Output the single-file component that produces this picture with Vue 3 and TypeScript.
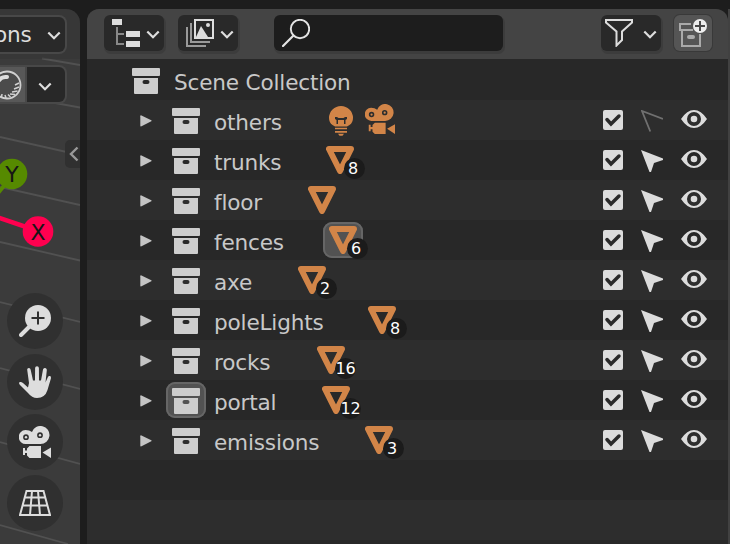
<script setup lang="ts">
interface Item {
  name: string
  kind: 'mesh' | 'lights'
  labelWidth: number
  count?: number
  selectable?: boolean
  activeIcon?: boolean
  activeMesh?: boolean
}

const items: Item[] = [
  { name: 'others', kind: 'lights', labelWidth: 113, selectable: false },
  { name: 'trunks', kind: 'mesh', labelWidth: 112, count: 8 },
  { name: 'floor', kind: 'mesh', labelWidth: 94 },
  { name: 'fences', kind: 'mesh', labelWidth: 115, count: 6, activeMesh: true },
  { name: 'axe', kind: 'mesh', labelWidth: 84, count: 2 },
  { name: 'poleLights', kind: 'mesh', labelWidth: 154, count: 8 },
  { name: 'rocks', kind: 'mesh', labelWidth: 103, count: 16 },
  { name: 'portal', kind: 'mesh', labelWidth: 108, count: 12, activeIcon: true },
  { name: 'emissions', kind: 'mesh', labelWidth: 151, count: 3 },
]
</script>

<template>
  <div class="screen">
    <svg class="defs" width="0" height="0">
      <symbol id="box" viewBox="0 0 28 26">
        <rect width="28" height="8" rx="1" />
        <path fill-rule="evenodd" d="M2 10H26V25q0 1-1 1H3q-1 0-1-1ZM12.5 12a2 2 0 0 0 0 4h3a2 2 0 0 0 0-4Z" />
      </symbol>
      <symbol id="chevron" viewBox="0 0 14 9">
        <path d="M1.3 1.5 7 7.2 12.7 1.5" fill="none" stroke="currentColor" stroke-width="2.200" />
      </symbol>
      <symbol id="movie" viewBox="0 0 32 32">
        <path fill-rule="evenodd" d="M6.5 4A6.5 6.5 0 1 0 7 18H21.5A9 9 0 1 0 13 6Q10.500 4 6.500 4ZM7 8.300a2.900 2.900 0 1 1 0 5.800a2.900 2.900 0 0 1 0-5.800ZM21 6.300a2.900 2.900 0 1 1 0 5.800a2.900 2.900 0 0 1 0-5.800Z" />
        <circle cx="7" cy="11.200" r="1.200" /><circle cx="21" cy="9.200" r="1.200" />
        <path d="M10.500 20H22V32H10.500L8 29.500V27H6V29H4V22H6V24.500H8V22.500ZM32 21.500V32L23.500 26.500Z" />
      </symbol>
    </svg>

    <section class="viewport">
      <svg class="scene" viewBox="0 0 80 535" width="80" height="535">
        <path d="M42 49.500 80 56M0 84 80 98.500M0 128 80 146M0 178 80 196M0 233 80 251.500M0 293 80 313M0 359 80 380M0 433 80 455M0 516 68 535" stroke="#515151" stroke-width="1.800" />
        <path d="M-2 184 8 172" stroke="#568a00" stroke-width="4" />
        <path d="M-2 208.500 38 222" stroke="#ff004f" stroke-width="4.500" />
        <circle cx="12" cy="165" r="15.300" fill="#568a00" />
        <circle cx="38" cy="222.500" r="15.300" fill="#ff004f" />
        <text x="12" y="173" text-anchor="middle" class="axis">Y</text>
        <text x="38" y="230.500" text-anchor="middle" class="axis">X</text>
      </svg>
      <div class="view-header">
        <div class="options"><span>ons</span><svg class="chev"><use href="#chevron" /></svg></div>
      </div>
      <div class="shading">
        <div class="ball">
          <svg width="30" height="30" viewBox="0 0 30 30">
            <circle cx="15" cy="15" r="13.500" fill="#4b4b4b" stroke="#d0d0d0" stroke-width="1.800" />
            <path d="M5 14Q8 6 15 7" fill="none" stroke="#ddd" stroke-width="4" stroke-linecap="round" />
            <path d="M27 13 23 15M27 17 22 19M25.500 21 20 22M23 24.500 18 24M18.500 27 16 24.500M14 28 13 25M9.500 27.500 10 24" stroke="#d0d0d0" stroke-width="1.500" />
          </svg>
        </div>
        <div class="drop"><svg class="chev"><use href="#chevron" /></svg></div>
      </div>
      <div class="sidebar-tab">
        <svg width="10" height="16" viewBox="0 0 10 16"><path d="M8.500 1.500 2 8l6.500 6.500" fill="none" stroke="#999" stroke-width="2.400" /></svg>
      </div>
      <nav class="gizmos">
        <div class="gizmo">
          <svg width="32" height="32" viewBox="0 0 32 32"><circle cx="19" cy="13" r="13" /><path d="m10 22-8 8" stroke="#ddd" stroke-width="4" stroke-linecap="round" /><path d="M12.500 13h13M19 6.500v13" stroke="#303030" stroke-width="2" /></svg>
        </div>
        <div class="gizmo">
          <svg width="32" height="32" viewBox="0 0 32 32">
            <path d="M10 17 8.200 3.700Q8 2 9.800 1.900 11.300 1.800 11.600 3.500L14 14.500 16 14.500 16.100 2Q16.200.200 18 .200 19.800.200 19.900 2L20 14.500 22 14.500 24 3.500Q24.400 1.700 26.200 2 28 2.400 27.800 4.200L26.500 16.500 28.800 11.200Q29.600 9.600 31 10 32.300 10.500 31.900 12.500L28.500 24Q26 32 18 32 13 32 9 27L1 19Q-.800 17 .800 16.100 2 15.500 4 17L9 21.500Z" />
          </svg>
        </div>
        <div class="gizmo"><svg class="movie"><use href="#movie" /></svg></div>
        <div class="gizmo">
          <svg width="32" height="26" viewBox="0 0 32 26"><path d="M7.500 1h17L31 25H1ZM5.800 7.500h20.400M3.800 15.500h24.400M13 1l-2 24M19 1l2 24" fill="none" stroke="#ddd" stroke-width="2" /></svg>
        </div>
      </nav>
    </section>

    <section class="outliner">
      <header class="toolbar">
        <button class="tool tree">
          <svg width="28" height="28" viewBox="0 0 28 28"><path d="M5 8V25H12M5 15H12" fill="none" stroke="#888" stroke-width="2" /><path d="M0 0h10v6H0ZM14 12h14v6H14ZM14 22h14v6H14Z" /></svg>
          <svg class="chev"><use href="#chevron" /></svg>
        </button>
        <button class="tool display">
          <svg width="28" height="28" viewBox="0 0 28 28"><path d="M1 8V27H20M5 4V23H24" fill="none" stroke="#999" stroke-width="2" /><rect x="9" y="1" width="18" height="18" fill="none" stroke="#ddd" stroke-width="2" /><path d="m10 18 5-11 7 11Z" /><circle cx="22" cy="6" r="2" /></svg>
          <svg class="chev"><use href="#chevron" /></svg>
        </button>
        <div class="search">
          <svg width="28" height="28" viewBox="0 0 28 28"><circle cx="18" cy="10" r="9.200" fill="none" stroke="#e4e4e4" stroke-width="1.900" /><path d="M11.500 16.500 1 27" stroke="#e4e4e4" stroke-width="2.200" stroke-linecap="round" /></svg>
        </div>
        <button class="tool filter">
          <svg width="28" height="28" viewBox="0 0 28 28"><path d="M1 1H27V3.500L17 12.500V21L11.500 26.500V12.500L1 3.500Z" fill="none" stroke="#ddd" stroke-width="2" /></svg>
          <svg class="chev"><use href="#chevron" /></svg>
        </button>
        <button class="new-collection">
          <svg width="28" height="28" viewBox="0 0 28 28"><path d="M12 5H1v6H14M3 11V27H21V15" fill="none" stroke="#aaa" stroke-width="2" /><rect x="8" y="16" width="8" height="4" rx="2" fill="#aaa" /><circle cx="21" cy="7" r="7" fill="#eee" /><path d="M16 7h10M21 2v10" stroke="#4a4a4a" stroke-width="2" /></svg>
        </button>
      </header>

      <div class="row root">
        <svg class="box"><use href="#box" /></svg>
        <span class="label">Scene Collection</span>
      </div>
      <div v-for="item in items" :key="item.name" class="row child">
        <svg class="expand" viewBox="0 0 12 12"><path d="M.300 1.200Q.300 0 1.500.500L11.300 5.200Q12 5.700 11.300 6.200L1.500 11.300Q.300 11.800.300 10.600Z" /></svg>
        <span class="box-cell" :class="{ lit: item.activeIcon }"><svg class="box"><use href="#box" /></svg></span>
        <span class="label" :style="{ width: item.labelWidth + 'px' }">{{ item.name }}</span>
        <span v-if="item.kind === 'lights'" class="lights">
          <svg width="28" height="32" viewBox="0 0 28 32">
            <path fill-rule="evenodd" d="M14 1A12 12 0 0 0 2 13Q2 17.500 5.500 20L8 21.500H20L22.500 20Q26 17.500 26 13A12 12 0 0 0 14 1ZM8 12H10L11.500 13H16.500L18 12H20V14L18.500 15V19H17V15H11V19H9.500V15L8 14Z" />
            <path d="M8 22.800h12v1.500h-12ZM8 26h12v1.700h-12ZM11 28.700h6l-1.500 2h-3Z" />
          </svg>
          <svg class="movie"><use href="#movie" /></svg>
        </span>
        <span v-else class="mesh" :class="{ lit: item.activeMesh }">
          <svg width="28" height="28" viewBox="0 0 28 28"><path d="M3 3H25L14 25Z" fill="none" stroke="#d28548" stroke-width="6" stroke-linejoin="round" /></svg>
          <span v-if="item.count" class="badge" :class="{ wide: item.count > 9 }">{{ item.count }}</span>
        </span>
        <span class="controls">
          <svg width="20" height="20" viewBox="0 0 20 20"><rect width="20" height="20" rx="2" /><path d="m4 9.500 4 4.500 8-8" fill="none" stroke="#292929" stroke-width="3.500" stroke-linecap="round" /></svg>
          <svg class="cursor" width="22" height="22" viewBox="0 0 22 22">
            <path v-if="item.selectable === false" d="M9.300 21.500 1 1 22 9" fill="none" stroke="#707070" stroke-width="1.800" />
            <path v-else d="M0 0 22 8.500V10L13 13 10 22H8.500Z" />
          </svg>
          <svg class="eye" width="26" height="18" viewBox="0 0 26 18"><path fill-rule="evenodd" d="M0 9Q6 0 13 0T26 9Q20 18 13 18T0 9ZM13 2a7 7 0 1 0 0 14a7 7 0 0 0 0-14Z" /><circle cx="13" cy="9" r="3.300" /></svg>
        </span>
      </div>
      <div class="row"></div>
      <div class="row"></div>
      <div class="row"></div>
    </section>
    <div class="edge"></div>
  </div>
</template>

<style>
body { background: #1d1d1d; overflow: hidden; }
</style>

<style scoped>
.screen {
  box-sizing: border-box;
  display: flex;
  width: 730px;
  height: 544px;
  padding-top: 9px;
  overflow: hidden;
  background: #1d1d1d;
  color: #c8c8c8;
  font: 21.600px/40px "DejaVu Sans", sans-serif;
  letter-spacing: -0.180px;
}
svg { display: block; flex: none; fill: currentColor; }
.defs { position: absolute; }
.chev { width: 14px; height: 9px; color: #ddd; }
.movie { width: 32px; height: 32px; }

.viewport {
  position: relative;
  flex: none;
  width: 80px;
  margin-right: 7px;
  overflow: hidden;
  border-radius: 0 14px 0 0;
  background: #3b3b3b;
}
.scene { position: absolute; inset: 0; }
.axis { fill: #161616; font-size: 22px; letter-spacing: 0; }
.view-header {
  position: relative;
  height: 50px;
  padding-top: 6px;
  box-sizing: border-box;
  background: rgba(48, 48, 48, 0.35);
}
.options {
  display: flex;
  align-items: center;
  box-sizing: border-box;
  width: 67px;
  height: 39px;
  border: 2px solid #484848;
  border-left: 0;
  border-radius: 0 8px 8px 0;
  background: #292929;
  color: #ddd;
}
.options span { margin-left: -6px; width: 53px; }
.options .chev { margin-top: 2px; }
.shading { position: relative; display: flex; width: 67px; margin-top: 6px; }
.ball {
  box-sizing: border-box;
  display: flex;
  align-items: center;
  width: 27px;
  height: 39px;
  border: 2px solid #484848;
  border-left: 0;
  background: #585858;
}
.ball svg { margin-left: -8px; }
.drop {
  box-sizing: border-box;
  width: 40px;
  height: 39px;
  padding: 15px 0 0 11px;
  border: 2px solid #484848;
  border-left: 0;
  border-radius: 0 8px 8px 0;
  background: #282828;
}
.sidebar-tab {
  position: relative;
  display: flex;
  align-items: center;
  width: 15px;
  height: 28px;
  margin: 36px 0 0 auto;
  border-radius: 5px 0 0 5px;
  background: #303030;
}
.sidebar-tab svg { margin-left: 4px; }
.gizmos {
  position: relative;
  display: flex;
  flex-direction: column;
  gap: 4.700px;
  margin: 125px 0 0 7px;
}
.gizmo {
  display: grid;
  place-items: center;
  width: 56px;
  height: 56px;
  border-radius: 50%;
  background: #303030;
  color: #ddd;
}

.outliner {
  flex: none;
  width: 641px;
  overflow: hidden;
  border-radius: 12px 12px 0 0;
  background: #282828;
}
.toolbar {
  display: flex;
  box-sizing: border-box;
  height: 50px;
  padding: 6px 0 0 17px;
  background: #444;
}
.tool, .search, .new-collection {
  display: flex;
  align-items: center;
  box-sizing: border-box;
  flex: none;
  height: 36px;
  border: 0;
  border-radius: 6px;
  padding: 0 0 0 8px;
  background: #292929;
  color: #ddd;
  box-shadow: 1px 2px 0 1px #3c3c3c;
}
.tool { width: 60px; }
.tool .chev { margin: 2px 0 0 6px; }
.display { margin-left: 14px; }
.search { width: 229px; margin-left: 36px; background: #1d1d1d; }
.filter { width: 60px; margin-left: 98px; padding-left: 4px; }
.filter .chev { margin-left: 10px; }
.new-collection { width: 38px; margin-left: 13px; padding-left: 5px; background: #555; box-shadow: 0 0 0 1px #393939; }

.row { display: flex; align-items: center; height: 40px; }
.row:nth-child(odd) { background: #2d2d2d; }
.root { padding: 1px 0 0 45px; }
.root .label { margin-left: 14px; }
.label { flex: none; white-space: nowrap; padding-top: 5px; }
.box { width: 28px; height: 26px; color: #cdcdcd; }
.root .box, .box-cell { margin-top: 2px; }
.child { padding-left: 53px; }
.expand { width: 12px; height: 12px; margin-top: 1px; color: #c4c4c4; }
.box-cell {
  display: grid;
  place-items: center;
  box-sizing: border-box;
  width: 40px;
  height: 36px;
  margin-left: 14px;
  margin-right: 8px;
}
.lit { border-radius: 9px; background: #525252; box-shadow: inset 0 0 0 2px #666; }
.box-cell.lit { margin-top: 0; padding-top: 2px; }
.lights { display: flex; gap: 10px; color: #d28548; margin-top: 1px; }
.lights .movie { width: 30px; height: 30px; margin-top: -1px; }
.mesh { position: relative; display: block; }
.mesh.lit { padding: 4px 6px; margin: 0 -6px; }
.badge {
  position: absolute;
  left: 18px;
  top: 12px;
  width: 21px;
  height: 21px;
  border-radius: 50%;
  background: #1b1b1b;
  color: #fff;
  font-size: 16px;
  line-height: 22px;
  letter-spacing: -0.300px;
  text-align: center;
  text-indent: -3px;
}
.badge.wide { text-indent: 0; }
.mesh.lit .badge { left: 24px; top: 16px; }
.controls { display: flex; align-items: center; margin-left: auto; padding-right: 21px; color: #dcdcdc; }
.cursor { margin: 2px 18px 0; }
.eye { margin-top: -2px; }
.edge { width: 2px; background: #414141; }
</style>
